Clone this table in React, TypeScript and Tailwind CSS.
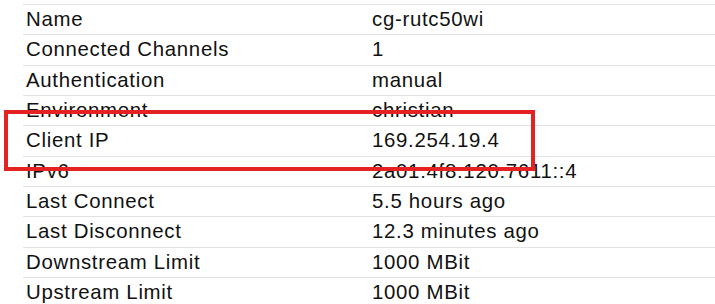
const rows: [string, string][] = [
  ['Name', 'cg-rutc50wi'],
  ['Connected Channels', '1'],
  ['Authentication', 'manual'],
  ['Environment', 'christian'],
  ['Client IP', '169.254.19.4'],
  ['IPv6', '2a01:4f8:120:7611::4'],
  ['Last Connect', '5.5 hours ago'],
  ['Last Disconnect', '12.3 minutes ago'],
  ['Downstream Limit', '1000 MBit'],
  ['Upstream Limit', '1000 MBit'],
];

export default function App() {
  return (
    <div
      className="relative h-[304px] w-[715px] overflow-hidden bg-white text-[20.4px] tracking-[0.7px] text-[#111]"
      style={{ fontFamily: '"Liberation Sans", Arial, sans-serif' }}
    >
      <div className="ml-[23px] pt-[4px]">
        {rows.map(([label, value]) => (
          <div
            key={label}
            className="grid h-[30.33px] grid-cols-[346px_1fr] border-t border-[#e2e2e2] px-[3px] pt-[3px] leading-[23px]"
          >
            <span>{label}</span>
            <span>{value}</span>
          </div>
        ))}
      </div>
      <div className="absolute left-[4px] top-[110px] h-[61px] w-[531px] border-[4px] border-[#e52222]" />
    </div>
  );
}
